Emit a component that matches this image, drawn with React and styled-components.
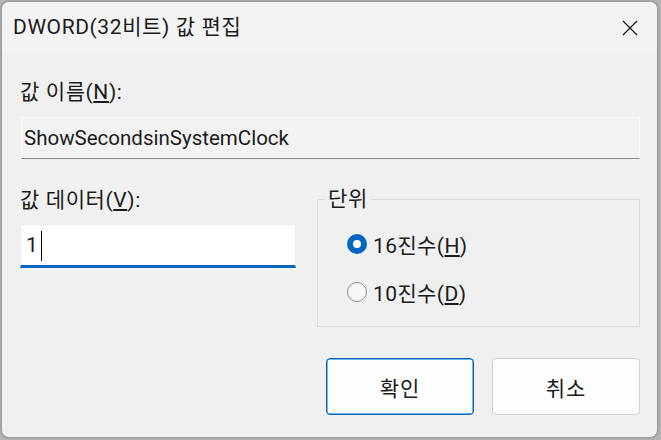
import React from "react";
import styled, { createGlobalStyle } from "styled-components";

const Global = createGlobalStyle`
  html, body { margin: 0; padding: 0; }
  body {
    width: 661px; height: 440px; overflow: hidden;
    background: #b3b3b3;
    font-family: Roboto, "Noto Sans CJK KR", sans-serif;
    color: #1b1b1b;
  }
  #root { padding: 1px 0 0 1px; }
`;

const Window = styled.div`
  width: 655px;
  height: 435px;
  border: 1px solid #9d9d9d;
  border-radius: 8px;
  background: #f0f0f0;
  overflow: hidden;
  display: flex;
  flex-direction: column;
  box-shadow: 0 0 2px rgba(0,0,0,0.25);
`;

const TitleBar = styled.div`
  height: 49px;
  flex: none;
  background: #f3f3f3;
  display: flex;
  align-items: center;
  justify-content: space-between;
  padding: 0 19px 0 11px;
`;

const Title = styled.div`
  font-size: 21px;
  line-height: 26px;
  letter-spacing: 0.6px;
  margin-top: 1px;
`;

const CloseBtn = styled.div`
  width: 16px;
  height: 16px;
  display: flex;
  align-items: center;
  justify-content: center;
  margin-top: 2px;
`;

const Content = styled.div`
  padding: 28px 17px 0 18px;
  display: flex;
  flex-direction: column;
`;

const Label = styled.div`
  font-size: 21px;
  line-height: 26px;
  letter-spacing: 0.6px;
  margin-top: ${p => p.$mt || 0}px;
  u { text-underline-offset: 2px; }
`;

const ReadField = styled.div`
  margin: 12px 0 0 1px;
  height: 40px;
  background: #f2f2f2;
  border: 1px solid #fbfbfb;
  border-bottom: 1px solid #8a8a8a;
  display: flex;
  align-items: center;
  padding-left: 2px;
  font-size: 20.5px;
`;

const Lower = styled.div`
  margin-top: 27px;
  display: grid;
  grid-template-columns: 276px 323px;
  column-gap: 21px;
  align-items: start;
`;

const LeftCol = styled.div`
  display: flex;
  flex-direction: column;
`;

const DataInput = styled.div`
  margin-top: 11px;
  height: 40px;
  background: #ffffff;
  border: 1px solid #ececec;
  border-bottom: 3px solid #0067c0;
  border-radius: 2px 2px 0 0;
  display: flex;
  align-items: center;
  padding-left: 5px;
  font-size: 21px;
`;

const Caret = styled.span`
  display: inline-block;
  width: 1.5px;
  height: 30px;
  background: #000;
  margin-left: 3px;
  margin-top: 2px;
`;

const Group = styled.fieldset`
  margin: 0;
  padding: 17px 0 0 29px;
  height: 122px;
  border: 1px solid #d9d9d9;
  min-width: 0;
  display: flex;
  flex-direction: column;
  gap: 18px;
`;

const Legend = styled.legend`
  font-size: 21px;
  line-height: 26px;
  letter-spacing: 0.6px;
  padding: 0 3px;
  margin-left: -22px;
`;

const RadioRow = styled.div`
  height: 30px;
  display: flex;
  align-items: center;
  gap: 6px;
  font-size: 21px;
  letter-spacing: 0.4px;
  u { text-underline-offset: 2px; }
`;

const Radio = styled.span`
  width: 20px;
  height: 20px;
  box-sizing: border-box;
  border-radius: 50%;
  flex: none;
  position: relative;
  background: ${p => (p.$on ? "#0067c0" : "#f7f7f7")};
  border: ${p => (p.$on ? "none" : "1px solid #8b8b8b")};
  &::after {
    content: "";
    display: ${p => (p.$on ? "block" : "none")};
    position: absolute;
    left: 6px; top: 6px;
    width: 8px; height: 8px;
    border-radius: 50%;
    background: #fff;
  }
`;

const Buttons = styled.div`
  margin-top: 31px;
  padding-right: 0;
  display: flex;
  justify-content: flex-end;
  gap: 18px;
`;

const Button = styled.div`
  width: 148px;
  height: 57px;
  box-sizing: border-box;
  border-radius: 4px;
  background: #fdfdfd;
  border: 1px solid ${p => (p.$primary ? "#0067c0" : "#d0d0d0")};
  box-shadow: ${p => (p.$primary ? "inset 0 0 0 0.5px #0067c0" : "none")};
  display: flex;
  align-items: center;
  justify-content: center;
  font-size: 21px;
  letter-spacing: 1px;
`;

export default function App() {
  return (
    <>
      <Global />
      <Window>
        <TitleBar>
          <Title>DWORD(32비트) 값 편집</Title>
          <CloseBtn>
            <svg width="16" height="16" viewBox="0 0 16 16">
              <path d="M1 1 L15 15 M15 1 L1 15" stroke="#1b1b1b" strokeWidth="1.3" fill="none" />
            </svg>
          </CloseBtn>
        </TitleBar>
        <Content>
          <Label>값 이름(<u>N</u>):</Label>
          <ReadField>ShowSecondsinSystemClock</ReadField>
          <Lower>
            <LeftCol>
              <Label $mt={1}>값 데이터(<u>V</u>):</Label>
              <DataInput>
                1<Caret />
              </DataInput>
            </LeftCol>
            <Group>
              <Legend>단위</Legend>
              <RadioRow>
                <Radio $on />
                <span>16진수(<u>H</u>)</span>
              </RadioRow>
              <RadioRow>
                <Radio />
                <span>10진수(<u>D</u>)</span>
              </RadioRow>
            </Group>
          </Lower>
          <Buttons>
            <Button $primary>확인</Button>
            <Button>취소</Button>
          </Buttons>
        </Content>
      </Window>
    </>
  );
}
